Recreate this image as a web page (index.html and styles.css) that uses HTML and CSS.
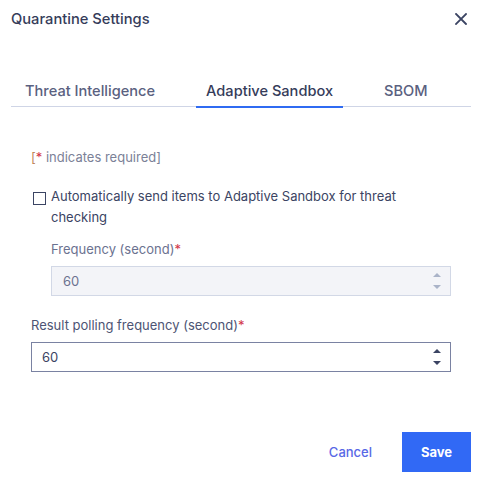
FILE: index.html
```html
<!DOCTYPE html>
<html>
<head>
<meta charset="utf-8">
<link rel="stylesheet" href="styles.css">
</head>
<body>
<div class="dialog">
  <div class="header">
    <div class="title">Quarantine Settings</div>
    <button class="close" aria-label="Close">
      <svg width="12" height="12" viewBox="0 0 12 12"><path d="M1 1L11 11M11 1L1 11" stroke="#3b4463" stroke-width="1.8" stroke-linecap="square"/></svg>
    </button>
  </div>
  <div class="tabs">
    <div class="tab">Threat Intelligence</div>
    <div class="tab active">Adaptive Sandbox</div>
    <div class="tab">SBOM</div>
  </div>
  <div class="content">
    <div class="required"><span class="br">[</span><span class="star">*</span> indicates required]</div>
    <div class="check-row">
      <span class="checkbox"></span>
      <span class="check-label">Automatically send items to Adaptive Sandbox for threat checking</span>
    </div>
    <div class="sub">
      <div class="label">Frequency (second)<span class="star">*</span></div>
      <div class="input disabled">
        <span class="val">60</span>
        <span class="spin">
          <svg width="8" height="18" viewBox="0 0 8 18"><path d="M0 5L4 1L8 5Z M0 13L8 13L4 17Z" fill="#aab3c8"/></svg>
        </span>
      </div>
    </div>
    <div class="field">
      <div class="label">Result polling frequency (second)<span class="star">*</span></div>
      <div class="input">
        <span class="val">60</span>
        <span class="spin">
          <svg width="8" height="18" viewBox="0 0 8 18"><path d="M0 5L4 1L8 5Z M0 13L8 13L4 17Z" fill="#3b4463"/></svg>
        </span>
      </div>
    </div>
  </div>
  <div class="footer">
    <button class="btn-cancel">Cancel</button>
    <button class="btn-save">Save</button>
  </div>
</div>
</body>
</html>
```
FILE: styles.css
```css
html, body {
  margin: 0;
  padding: 0;
  background: #ffffff;
}
body {
  font-family: Inter, Roboto, "Liberation Sans", sans-serif;
  color: #3b4463;
  width: 479px;
  height: 479px;
  overflow: hidden;
}
.dialog {
  display: flex;
  flex-direction: column;
  height: 479px;
}
.header {
  display: flex;
  align-items: center;
  justify-content: space-between;
  height: 38px;
  padding: 0 12px 0 11px;
}
.title {
  font-size: 14.7px;
  font-weight: 500;
  color: #353c5a;
}
.close {
  border: none;
  background: none;
  padding: 0;
  width: 12px;
  height: 12px;
  display: flex;
}
.tabs {
  display: flex;
  gap: 31px;
  margin: 39px 8px 0 11px;
  padding-left: 4px;
  border-bottom: 1px solid #cfd5e6;
}
.tab {
  font-size: 14.6px;
  font-weight: 500;
  color: #5a6180;
  padding: 0 10px;
  height: 29px;
  line-height: 29px;
  position: relative;
}
.tab.active {
  color: #353c5a;
}
.tab.active::after {
  content: "";
  position: absolute;
  left: 0;
  right: 0;
  bottom: -2px;
  height: 2px;
  background: #2f6bf2;
}
.content {
  padding: 0 28px 0 31px;
  font-size: 13px;
}
.required {
  margin-top: 41px;
  color: #7b8197;
  line-height: 18px;
}
.br {
  color: #c0865a;
}
.star {
  color: #d23548;
}
.check-row {
  display: flex;
  align-items: flex-start;
  margin-top: 23px;
  padding-left: 2px;
}
.checkbox {
  flex: none;
  width: 11px;
  height: 11px;
  border: 1px solid #3b4463;
  margin-top: 3px;
  margin-right: 5px;
}
.check-label {
  line-height: 21px;
  color: #3b4463;
  margin-top: -3px;
}
.sub {
  padding-left: 20px;
  margin-top: 12px;
}
.label {
  line-height: 18px;
  color: #4d5474;
}
.sub .label {
  color: #6b7290;
}
.input {
  margin-top: 8px;
  height: 28px;
  border: 1px solid #7a82a2;
  display: flex;
  align-items: center;
  justify-content: space-between;
  padding: 0 9px 0 10px;
  background: #fff;
}
.input.disabled {
  background: #f3f4f8;
  border-color: #d2d8e6;
  color: #6b7290;
}
.sub .input .val {
  padding-left: 1px;
}
.spin {
  display: flex;
}
.field {
  margin-top: 20px;
}
.footer {
  margin-top: auto;
  display: flex;
  justify-content: flex-end;
  align-items: center;
  gap: 30px;
  padding: 0 8px 7px 0;
}
.btn-cancel {
  border: none;
  background: none;
  font-family: inherit;
  font-size: 13px;
  font-weight: 500;
  color: #5868e6;
  padding: 0;
}
.btn-save {
  border: none;
  background: #3169f5;
  color: #fff;
  font-family: inherit;
  font-size: 13px;
  font-weight: 700;
  width: 69px;
  height: 40px;
  padding: 0;
}
```
